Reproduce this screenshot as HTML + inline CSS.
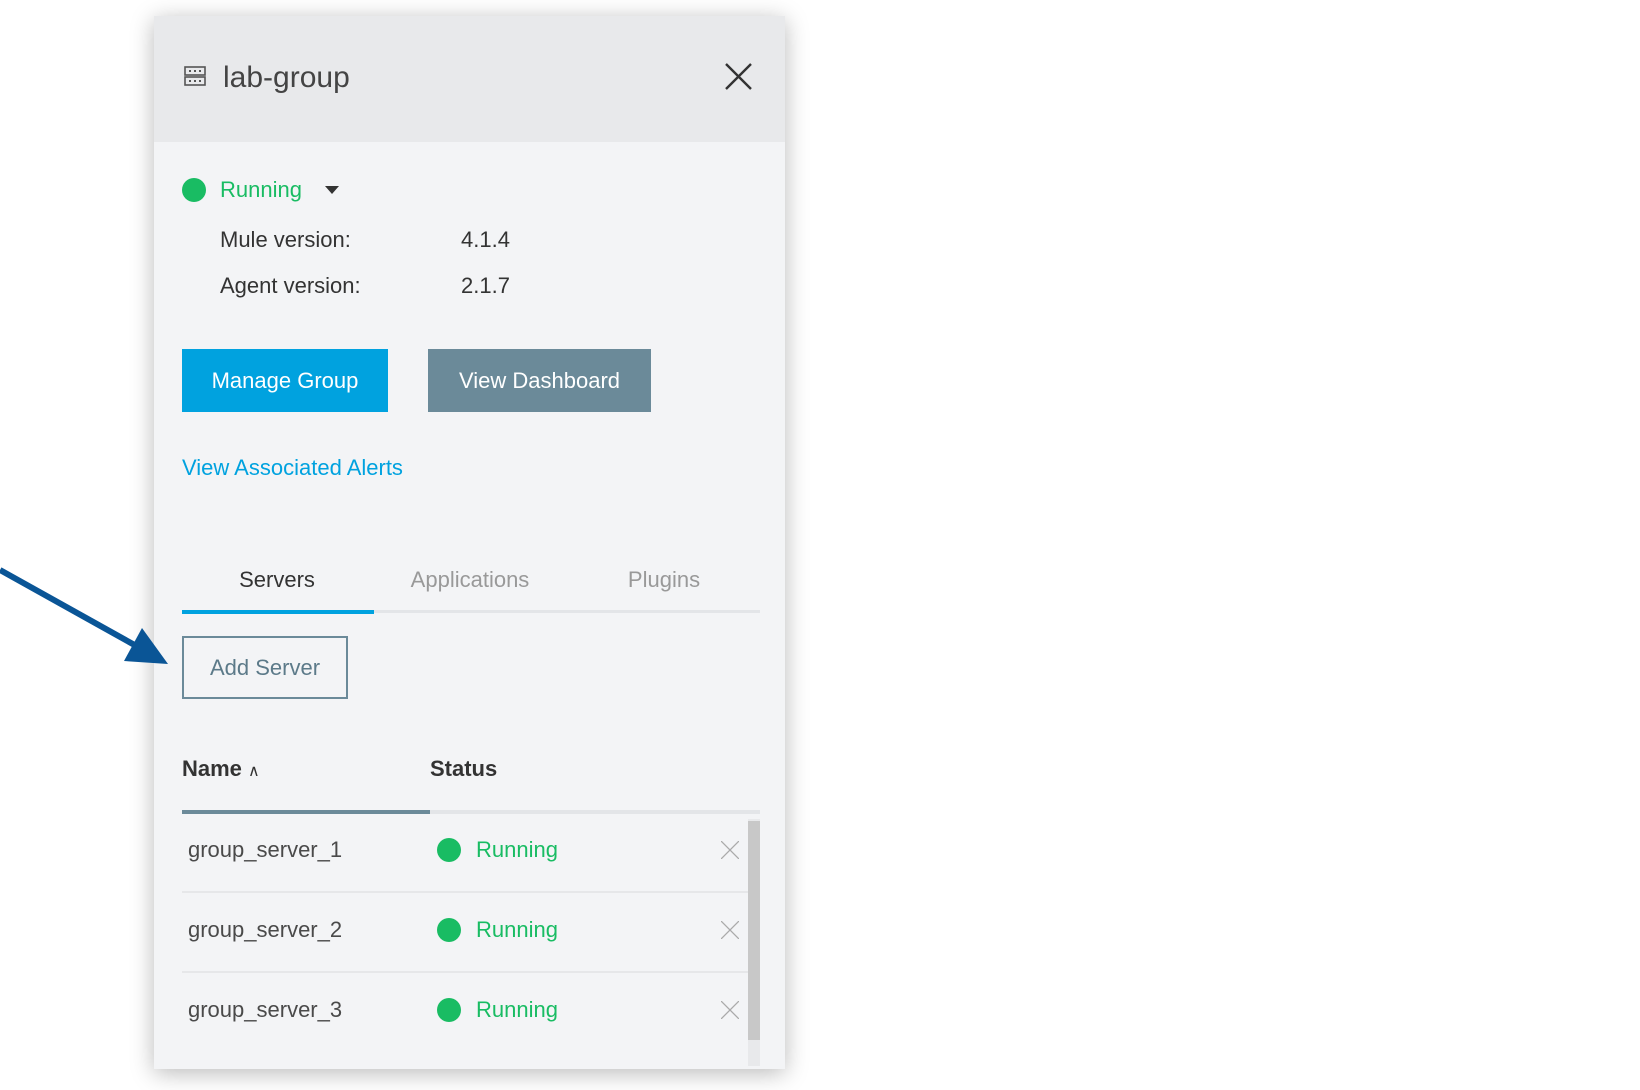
<!DOCTYPE html>
<html><head><meta charset="utf-8"><style>
*{margin:0;padding:0;box-sizing:border-box}
body{width:1640px;height:1090px;background:#fff;position:relative;overflow:hidden;font-family:"Liberation Sans",sans-serif;}
.panel{position:absolute;left:154px;top:16px;width:631px;height:1053px;background:#f3f4f6;box-shadow:0 4px 22px rgba(0,0,0,0.28);}
.hdr{position:absolute;left:0;top:0;width:631px;height:126px;background:#e8e9eb;}
.a{position:absolute;white-space:nowrap;}
.dot{position:absolute;width:24px;height:24px;border-radius:50%;background:#19bc63;}
.g{color:#19bc63;font-size:22px;}
.btn{position:absolute;color:#fff;font-size:22px;display:flex;align-items:center;justify-content:center;}
.tab{position:absolute;top:551px;font-size:22px;transform:translateX(-50%);}
.row{font-size:22px;color:#4a4a4a;}
</style></head><body>
<div class="panel">
<div class="hdr"></div>
<svg class="a" style="left:30px;top:50px" width="22" height="20" viewBox="0 0 22 20"><rect x="1" y="1" width="20" height="8" fill="none" stroke="#555" stroke-width="1.6"/><rect x="1" y="11" width="20" height="8" fill="none" stroke="#555" stroke-width="1.6"/><g fill="#555"><rect x="5" y="4" width="2" height="2"/><rect x="10" y="4" width="2" height="2"/><rect x="15" y="4" width="2" height="2"/><rect x="5" y="14" width="2" height="2"/><rect x="10" y="14" width="2" height="2"/><rect x="15" y="14" width="2" height="2"/></g></svg>
<div class="a" style="left:69px;top:45px;font-size:30px;color:#444;">lab-group</div>
<svg class="a" style="left:571px;top:47px" width="27" height="27"><path d="M1 1L26 26M26 1L1 26" stroke="#333" stroke-width="2.4"/></svg>
<div class="dot" style="left:28px;top:162px"></div>
<div class="a g" style="left:66px;top:161px">Running</div>
<svg class="a" style="left:171px;top:170px" width="14" height="8"><path d="M0 0H14L7 8Z" fill="#333"/></svg>
<div class="a" style="left:66px;top:211px;font-size:22px;color:#333">Mule version:</div>
<div class="a" style="left:307px;top:211px;font-size:22px;color:#333">4.1.4</div>
<div class="a" style="left:66px;top:257px;font-size:22px;color:#333">Agent version:</div>
<div class="a" style="left:307px;top:257px;font-size:22px;color:#333">2.1.7</div>
<div class="btn" style="left:28px;top:333px;width:206px;height:63px;background:#00a2df">Manage Group</div>
<div class="btn" style="left:274px;top:333px;width:223px;height:63px;background:#6b8a99">View Dashboard</div>
<div class="a" style="left:28px;top:439px;font-size:22px;color:#00a2df">View Associated Alerts</div>
<div class="tab" style="left:123px;color:#333">Servers</div>
<div class="tab" style="left:316px;color:#999">Applications</div>
<div class="tab" style="left:510px;color:#999">Plugins</div>
<div class="a" style="left:28px;top:594px;width:578px;height:3px;background:#e3e5e8"></div>
<div class="a" style="left:28px;top:594px;width:192px;height:4px;background:#00a2df"></div>
<div class="a" style="left:28px;top:620px;width:166px;height:63px;border:2px solid #6b8a99;color:#5c7a89;font-size:22px;display:flex;align-items:center;justify-content:center">Add Server</div>
<div class="a" style="left:28px;top:740px;font-size:22px;font-weight:bold;color:#333">Name <span style="font-weight:normal;font-size:16px">∧</span></div>
<div class="a" style="left:276px;top:740px;font-size:22px;font-weight:bold;color:#333">Status</div>
<div class="a" style="left:28px;top:794px;width:578px;height:4px;background:#e3e5e8"></div>
<div class="a" style="left:28px;top:794px;width:248px;height:4px;background:#6b8a99"></div>
<div class="a" style="left:594px;top:803px;width:12px;height:247px;background:#e8e9eb"></div>
<div class="a" style="left:594px;top:805px;width:12px;height:219px;background:#c8c8c8"></div>
<div class="a" style="left:28px;top:875px;width:566px;height:2px;background:#e6e7e9"></div>
<div class="a" style="left:28px;top:955px;width:566px;height:2px;background:#e6e7e9"></div>
<div class="a row" style="left:34px;top:821px">group_server_1</div>
<div class="a row" style="left:34px;top:901px">group_server_2</div>
<div class="a row" style="left:34px;top:981px">group_server_3</div>
<div class="dot" style="left:283px;top:822px"></div>
<div class="dot" style="left:283px;top:902px"></div>
<div class="dot" style="left:283px;top:982px"></div>
<div class="a g" style="left:322px;top:821px">Running</div>
<div class="a g" style="left:322px;top:901px">Running</div>
<div class="a g" style="left:322px;top:981px">Running</div>
<svg class="a" style="left:567px;top:825px" width="18" height="18"><path d="M0 0L18 18M18 0L0 18" stroke="#aaa" stroke-width="1.3"/></svg>
<svg class="a" style="left:567px;top:905px" width="18" height="18"><path d="M0 0L18 18M18 0L0 18" stroke="#aaa" stroke-width="1.3"/></svg>
<svg class="a" style="left:567px;top:985px" width="18" height="18"><path d="M0 0L18 18M18 0L0 18" stroke="#aaa" stroke-width="1.3"/></svg>
</div>
<svg style="position:absolute;left:0;top:0;z-index:5" width="200" height="700">
<line x1="0" y1="570" x2="140" y2="648" stroke="#0a5596" stroke-width="6"/>
<polygon points="168,664 124,661 142,628" fill="#0a5596"/>
</svg>
</body></html>
